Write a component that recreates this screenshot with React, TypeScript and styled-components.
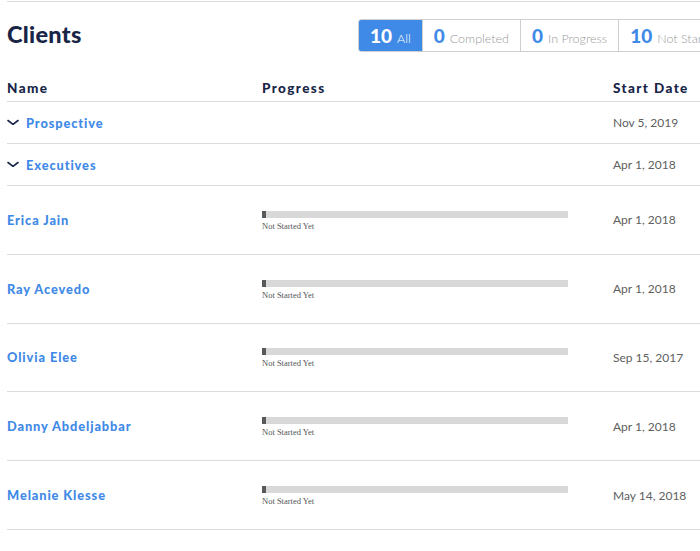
import { createGlobalStyle, styled } from "styled-components";

const GlobalStyle = createGlobalStyle`
  html, body {
    margin: 0;
    padding: 0;
    background: #ffffff;
    overflow: hidden;
  }
  body {
    font-family: Lato, "Open Sans", sans-serif;
    color: #182547;
  }
`;

const Page = styled.div`
  width: 760px;
  margin-top: 1px;
  margin-left: 7px;
  border-top: 1px solid #dcdcdc;
`;

const TitleBar = styled.div`
  display: grid;
  grid-template-columns: 351px auto;
  align-items: center;
  padding-top: 17px;
`;

const Title = styled.h1`
  margin: -3px 0 0;
  font-size: 23.5px;
  font-weight: 900;
  letter-spacing: 0.3px;
  color: #182547;
`;

const Tabs = styled.div`
  display: flex;
  justify-self: start;
  height: 33px;
  border: 1px solid #cfcfcf;
  border-radius: 3px;
  box-sizing: border-box;
  overflow: hidden;
`;

const Tab = styled.div<{ $active?: boolean }>`
  display: flex;
  align-items: baseline;
  gap: 5px;
  padding: 0 11px 0 11px;
  line-height: 31px;
  white-space: nowrap;
  background: ${(p) => (p.$active ? "#3f8ae6" : "#ffffff")};
  border-left: ${(p) => (p.$active ? "none" : "1px solid #cfcfcf")};
  &:first-child {
    border-left: none;
  }
`;

const TabCount = styled.span<{ $active?: boolean }>`
  font-size: 19px;
  font-weight: 900;
  color: ${(p) => (p.$active ? "#ffffff" : "#3f8ae6")};
`;

const TabLabel = styled.span<{ $active?: boolean }>`
  font-size: 12.5px;
  font-weight: 300;
  color: ${(p) => (p.$active ? "#ffffff" : "#9a9a9a")};
`;

const Grid = styled.div`
  display: grid;
  grid-template-columns: 255px 351px 1fr;
  align-items: center;
`;

const HeadRow = styled(Grid)`
  padding: 28px 0 5px;
  border-bottom: 1px solid #dcdcdc;
`;

const HeadCell = styled.div`
  font-size: 13.5px;
  font-weight: 900;
  line-height: 16px;
  letter-spacing: 1.4px;
  color: #182547;
`;

const Row = styled(Grid)<{ $group?: boolean }>`
  height: ${(p) => (p.$group ? 41 : 67.8)}px;
  border-bottom: 1px solid #dcdcdc;
`;

const NameLink = styled.a`
  display: flex;
  align-items: center;
  gap: 7px;
  font-size: 12.8px;
  font-weight: 900;
  letter-spacing: 0.9px;
  color: #3f8ae6;
  text-decoration: none;
`;

const Chevron = styled.svg`
  width: 12px;
  height: 7px;
  flex: none;
`;

const ProgressCell = styled.div`
  display: flex;
  flex-direction: column;
  gap: 3px;
  padding-top: 2px;
`;

const Track = styled.div`
  width: 306px;
  height: 7px;
  background: #d8d8d8;
  display: flex;
`;

const Fill = styled.div`
  width: 4px;
  background: #595959;
`;

const ProgressNote = styled.span`
  font-family: "Liberation Serif", "Times New Roman", serif;
  font-size: 8.5px;
  line-height: 10px;
  color: #555555;
`;

const DateCell = styled.div`
  font-size: 12px;
  font-weight: 400;
  color: #606060;
`;

const tabs = [
  { count: 10, label: "All", active: true },
  { count: 0, label: "Completed" },
  { count: 0, label: "In Progress" },
  { count: 10, label: "Not Started" },
];

const groups = [
  { name: "Prospective", date: "Nov 5, 2019" },
  { name: "Executives", date: "Apr 1, 2018" },
];

const clients = [
  { name: "Erica Jain", date: "Apr 1, 2018" },
  { name: "Ray Acevedo", date: "Apr 1, 2018" },
  { name: "Olivia Elee", date: "Sep 15, 2017" },
  { name: "Danny Abdeljabbar", date: "Apr 1, 2018" },
  { name: "Melanie Klesse", date: "May 14, 2018" },
];

const ChevronDown = () => (
  <Chevron viewBox="0 0 12 7">
    <path d="M1 1.5 L6 5.3 L11 1.5" fill="none" stroke="#182547" strokeWidth="1.6" strokeLinecap="round" strokeLinejoin="round" />
  </Chevron>
);

export default function App() {
  return (
    <>
      <GlobalStyle />
      <Page>
        <TitleBar>
          <Title>Clients</Title>
          <Tabs>
            {tabs.map((t) => (
              <Tab key={t.label} $active={t.active}>
                <TabCount $active={t.active}>{t.count}</TabCount>
                <TabLabel $active={t.active}>{t.label}</TabLabel>
              </Tab>
            ))}
          </Tabs>
        </TitleBar>

        <HeadRow>
          <HeadCell>Name</HeadCell>
          <HeadCell>Progress</HeadCell>
          <HeadCell>Start Date</HeadCell>
        </HeadRow>

        {groups.map((g) => (
          <Row key={g.name} $group>
            <NameLink href="#">
              <ChevronDown />
              {g.name}
            </NameLink>
            <div />
            <DateCell>{g.date}</DateCell>
          </Row>
        ))}

        {clients.map((c) => (
          <Row key={c.name}>
            <NameLink href="#">{c.name}</NameLink>
            <ProgressCell>
              <Track>
                <Fill />
              </Track>
              <ProgressNote>Not Started Yet</ProgressNote>
            </ProgressCell>
            <DateCell>{c.date}</DateCell>
          </Row>
        ))}
      </Page>
    </>
  );
}
